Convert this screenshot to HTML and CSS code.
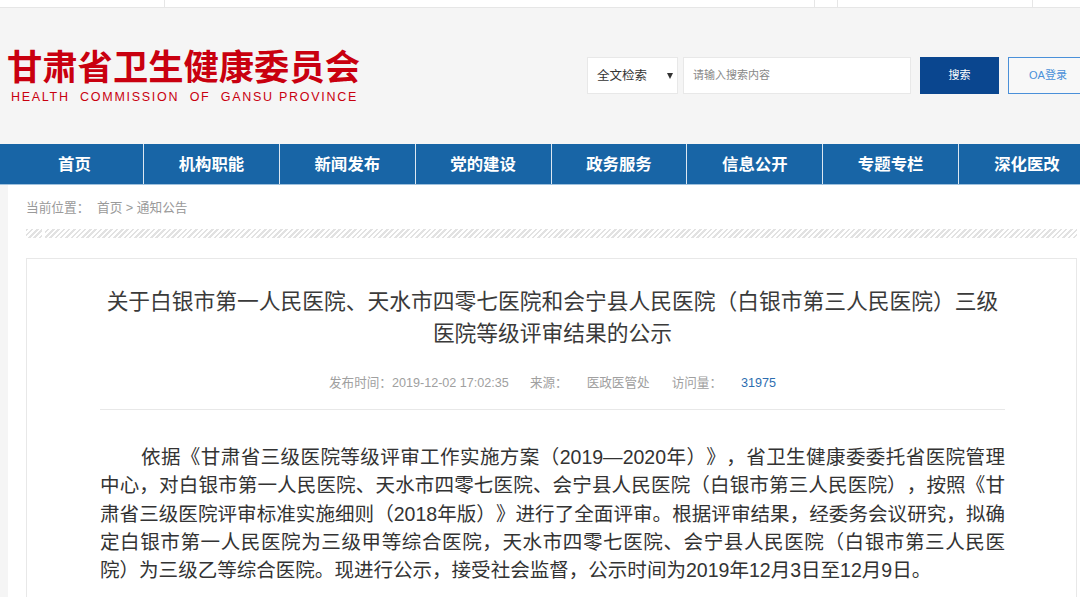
FILE: index.html
```html
<!DOCTYPE html>
<html lang="zh-CN">
<head>
    <meta charset="UTF-8">
    <meta name="viewport" content="width=device-width, initial-scale=1.0">
    <title>甘肃省卫生健康委员会</title>
    <link rel="stylesheet" href="styles.css">
</head>
<body>
    <!-- Top strip -->
    <div class="topbar">
        <span class="topbar-cell cell-a"></span>
        <span class="topbar-cell cell-b"></span>
        <span class="topbar-cell cell-c"></span>
        <span class="topbar-cell cell-d"></span>
    </div>

    <!-- Logo and search -->
    <header class="header">
        <div class="logo">
            <div class="logo-cn">甘肃省卫生健康委员会</div>
            <div class="logo-en">HEALTH&nbsp; COMMISSION&nbsp; OF&nbsp; GANSU PROVINCE</div>
        </div>
        <div class="search">
            <div class="search-type">全文检索<span class="caret"></span></div>
            <div class="search-input">请输入搜索内容</div>
            <a href="#" class="search-btn">搜索</a>
            <a href="#" class="oa-btn">OA登录</a>
        </div>
    </header>

    <!-- Nav -->
    <nav class="nav">
        <a href="#" class="nav-item nav-first">首页</a>
        <a href="#" class="nav-item">机构职能</a>
        <a href="#" class="nav-item">新闻发布</a>
        <a href="#" class="nav-item">党的建设</a>
        <a href="#" class="nav-item">政务服务</a>
        <a href="#" class="nav-item">信息公开</a>
        <a href="#" class="nav-item">专题专栏</a>
        <a href="#" class="nav-item nav-last">深化医改</a>
    </nav>

    <!-- Main -->
    <main class="main">
        <div class="crumbs">当前位置： <span class="crumbs-path">首页 &gt; 通知公告</span></div>
        <div class="stripes"></div>
        <article class="article">
            <h1 class="title">关于白银市第一人民医院、天水市四零七医院和会宁县人民医院（白银市第三人民医院）三级医院等级评审结果的公示</h1>
            <div class="meta">
                <span class="meta-time">发布时间：2019-12-02 17:02:35</span>
                <span class="meta-source">来源：</span>
                <span class="meta-dept">医政医管处</span>
                <span class="meta-visits">访问量：</span>
                <span class="meta-count">31975</span>
            </div>
            <p class="body-text">依据《甘肃省三级医院等级评审工作实施方案（2019—2020年）》，省卫生健康委委托省医院管理中心，对白银市第一人民医院、天水市四零七医院、会宁县人民医院（白银市第三人民医院），按照《甘肃省三级医院评审标准实施细则（2018年版）》进行了全面评审。根据评审结果，经委务会议研究，拟确定白银市第一人民医院为三级甲等综合医院，天水市四零七医院、会宁县人民医院（白银市第三人民医院）为三级乙等综合医院。现进行公示，接受社会监督，公示时间为2019年12月3日至12月9日。</p>
        </article>
    </main>
</body>
</html>
```

FILE: styles.css
```css
/* General Styles */
html, body {
    margin: 0;
    height: 597px;
    overflow: hidden;
}

body {
    font-family: "Liberation Sans", "Noto Sans CJK SC", sans-serif;
    background: #f5f5f5;
    color: #333;
    text-spacing-trim: space-all;
}

a {
    text-decoration: none;
}

/* Top strip */
.topbar {
    display: flex;
    height: 7px;
    background: #fff;
    border-bottom: 1px solid #e6e6e6;
}

.topbar-cell {
    border-right: 1px solid #e6e6e6;
}

.cell-a { width: 164px; }
.cell-b { width: 649px; }
.cell-c { width: 22px; }
.cell-d { width: 194px; }

/* Header */
.header {
    display: flex;
    justify-content: space-between;
    height: 136px;
}

.logo {
    padding: 41px 0 0 7px;
    color: #c9000f;
}

.logo-cn {
    font-size: 35.3px;
    line-height: 38px;
    font-weight: 700;
    white-space: nowrap;
}

.logo-en {
    margin: 3px 0 0 4px;
    font-size: 12.5px;
    line-height: 14px;
    letter-spacing: 1.72px;
    white-space: nowrap;
}

.search {
    display: flex;
    width: 493px;
    height: 37px;
    margin-top: 49px;
    font-size: 11px;
    line-height: 35px;
}

.search-type {
    display: flex;
    justify-content: space-between;
    align-items: center;
    box-sizing: border-box;
    width: 91px;
    padding: 1px 4px 0 9px;
    background: #fff;
    border: 1px solid #e8e8e8;
    color: #333;
    font-size: 12.5px;
}

.caret {
    width: 0;
    height: 0;
    border-left: 3px solid transparent;
    border-right: 3px solid transparent;
    border-top: 6px solid #333;
}

.search-input {
    box-sizing: border-box;
    width: 228px;
    margin-left: 5px;
    padding-left: 9px;
    background: #fff;
    border: 1px solid #e8e8e8;
    color: #888;
}

.search-btn {
    width: 79px;
    margin-left: 9px;
    background: #0a468f;
    color: #fff;
    text-align: center;
    line-height: 36px;
}

.oa-btn {
    box-sizing: border-box;
    width: 72px;
    margin-left: 9px;
    padding-left: 20px;
    border: 1px solid #4a90d9;
    border-right: 0;
    color: #4a90d9;
    background: #f8f8f8;
}

/* Nav */
.nav {
    display: flex;
    height: 40px;
    background: #1865a6;
    border-bottom: 1px solid #9fc1dd;
    overflow: hidden;
}

.nav-item {
    box-sizing: border-box;
    flex: none;
    width: 135.85px;
    border-right: 1px solid #dce7f1;
    color: #fff;
    font-size: 16.4px;
    font-weight: 700;
    line-height: 40px;
    text-align: center;
}

.nav-first {
    width: 144px;
    padding-left: 6px;
}

.nav-last {
    border-right: 0;
    white-space: nowrap;
}

/* Main */
.main {
    box-sizing: border-box;
    height: 412px;
    margin-left: 8px;
    padding: 0 3px 0 18px;
    background: #fff;
}

.crumbs {
    padding-top: 15px;
    font-size: 12.7px;
    line-height: 16px;
    color: #9a9a9a;
    white-space: pre;
}

.crumbs-path {
    margin-left: 4px;
}

.stripes {
    height: 9px;
    margin-top: 13px;
    background:
        linear-gradient(#fff, #fff) 16px 0 / 3px 100% no-repeat,
        repeating-linear-gradient(135deg, #e2e2e2 0 1.8px, #fff 1.8px 3.75px);
}

.article {
    box-sizing: border-box;
    height: 400px;
    margin-top: 20px;
    padding: 27px 71px 0 73px;
    border: 1px solid #e8e8e8;
}

.title {
    margin: 0;
    font-size: 21.75px;
    font-weight: 400;
    line-height: 32px;
    text-align: center;
    color: #3a3a3a;
}

.meta {
    display: flex;
    justify-content: center;
    height: 34px;
    margin-top: 25px;
    border-bottom: 1px solid #e8e8e8;
    font-size: 12.6px;
    line-height: 16px;
    color: #a0a0a0;
    white-space: nowrap;
}

.meta-source { margin-left: 21px; }
.meta-dept { margin-left: 19px; }
.meta-visits { margin-left: 22px; }
.meta-count { margin-left: 19px; color: #2d6db0; }

.body-text {
    margin: 33px 0 0;
    font-size: 19.55px;
    line-height: 28.3px;
    text-indent: 41px;
    color: #333;
    text-align: justify;
}
```
